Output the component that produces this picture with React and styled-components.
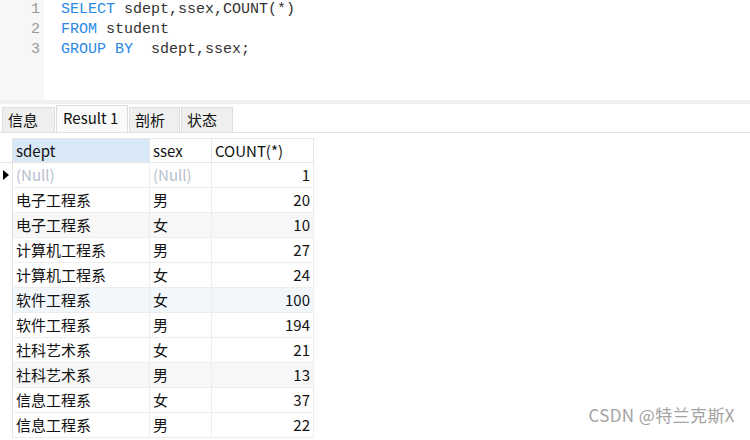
import React from 'react';
import styled, { createGlobalStyle } from 'styled-components';

const GlobalStyle = createGlobalStyle`
    html, body {
        margin: 0;
        padding: 0;
        background: #ffffff;
    }
    body {
        width: 750px;
        height: 440px;
        overflow: hidden;
        font-family: "Noto Sans CJK SC", "Noto Sans", sans-serif;
    }
`;

const Page = styled.div`
    position: relative;
    width: 750px;
    height: 440px;
    display: flex;
    flex-direction: column;
`;

const Editor = styled.div`
    display: flex;
    height: 100px;
    font-family: "Liberation Mono", "DejaVu Sans Mono", monospace;
    font-size: 15px;
    line-height: 20px;
`;

const Gutter = styled.div`
    width: 44px;
    background: #f7f7f7;
    color: #9a9a9a;
    text-align: right;
    padding-right: 4px;
    box-sizing: border-box;
`;

const Code = styled.div`
    flex: 1;
    padding-left: 17px;
    color: #333333;
    white-space: pre;
`;

const Kw = styled.span`
    color: #2b8ae8;
`;

const Divider = styled.div`
    height: 4px;
    background: #f0f0f0;
`;

const TabStrip = styled.div`
    display: flex;
    align-items: flex-end;
    height: 28px;
    padding-left: 2px;
    border-bottom: 1px solid #e2e2e2;
`;

const Tab = styled.div`
    box-sizing: border-box;
    width: ${p => p.w}px;
    height: ${p => (p.active ? 27 : 25)}px;
    margin-right: 1px;
    background: ${p => (p.active ? '#fafafa' : '#efefef')};
    border: 1px solid #dedede;
    border-bottom: none;
    font-size: 15px;
    line-height: ${p => (p.active ? 24 : 23)}px;
    padding-left: ${p => (p.active ? 6 : 5)}px;
    color: #111;
    white-space: nowrap;
`;

const Grid = styled.div`
    margin-top: 5px;
    display: grid;
    grid-template-columns: 13px 137px 62px 102px;
    grid-auto-rows: 25px;
    font-size: 15px;
`;

const HeadCell = styled.div`
    box-sizing: border-box;
    background: ${p => (p.sel ? '#d9e8f6' : '#ffffff')};
    border-right: 1px solid #e6e6e6;
    border-bottom: 1px solid #e6e6e6;
    border-top: 1px solid #e6e6e6;
    padding-left: 3px;
    line-height: 23px;
    color: #111;
    white-space: nowrap;
`;

const Indicator = styled.div`
    box-sizing: border-box;
    border-right: 1px solid #e2e2e2;
    border-bottom: 1px solid ${p => (p.head ? '#e6e6e6' : '#ffffff')};
    display: flex;
    align-items: center;
    justify-content: center;
`;

const Cell = styled.div`
    box-sizing: border-box;
    background: ${p => p.bg};
    border-right: 1px solid #ededed;
    border-bottom: 1px solid #ededed;
    padding: 0 3px 0 3px;
    line-height: 24px;
    text-align: ${p => (p.num ? 'right' : 'left')};
    color: ${p => (p.nul ? '#b6bfcc' : '#111111')};
    white-space: nowrap;
`;

const Watermark = styled.div`
    position: absolute;
    right: 15px;
    bottom: 13px;
    font-size: 17px;
    color: #a3a3a3;
    letter-spacing: 0.4px;
`;

const rows = [
    [null, null, 1],
    ['电子工程系', '男', 20],
    ['电子工程系', '女', 10],
    ['计算机工程系', '男', 27],
    ['计算机工程系', '女', 24],
    ['软件工程系', '女', 100],
    ['软件工程系', '男', 194],
    ['社科艺术系', '女', 21],
    ['社科艺术系', '男', 13],
    ['信息工程系', '女', 37],
    ['信息工程系', '男', 22],
];

const rowBg = i => {
    if (i === 5) return '#f2f7fc';
    if (i === 2 || i === 8) return '#f7f7f7';
    return '#ffffff';
};

export default function App() {
    return (
        <Page>
            <GlobalStyle />
            <Editor>
                <Gutter>
                    <div>1</div>
                    <div>2</div>
                    <div>3</div>
                </Gutter>
                <Code>
                    <div><Kw>SELECT</Kw> sdept,ssex,COUNT(*)</div>
                    <div><Kw>FROM</Kw> student</div>
                    <div><Kw>GROUP BY</Kw>  sdept,ssex;</div>
                </Code>
            </Editor>
            <Divider />
            <TabStrip>
                <Tab w={53}>信息</Tab>
                <Tab w={72} active>Result 1</Tab>
                <Tab w={51}>剖析</Tab>
                <Tab w={52}>状态</Tab>
            </TabStrip>
            <Grid>
                <Indicator head />
                <HeadCell sel>sdept</HeadCell>
                <HeadCell>ssex</HeadCell>
                <HeadCell>COUNT(*)</HeadCell>
                {rows.map((r, i) => (
                    <React.Fragment key={i}>
                        <Indicator>
                            {i === 0 && (
                                <svg width="6" height="10" viewBox="0 0 6 10">
                                    <path d="M0 0 L6 5 L0 10 Z" fill="#000" />
                                </svg>
                            )}
                        </Indicator>
                        <Cell bg={rowBg(i)} nul={r[0] === null}>{r[0] ?? '(Null)'}</Cell>
                        <Cell bg={rowBg(i)} nul={r[1] === null}>{r[1] ?? '(Null)'}</Cell>
                        <Cell bg={rowBg(i)} num>{r[2]}</Cell>
                    </React.Fragment>
                ))}
            </Grid>
            <Watermark>CSDN @特兰克斯X</Watermark>
        </Page>
    );
}
